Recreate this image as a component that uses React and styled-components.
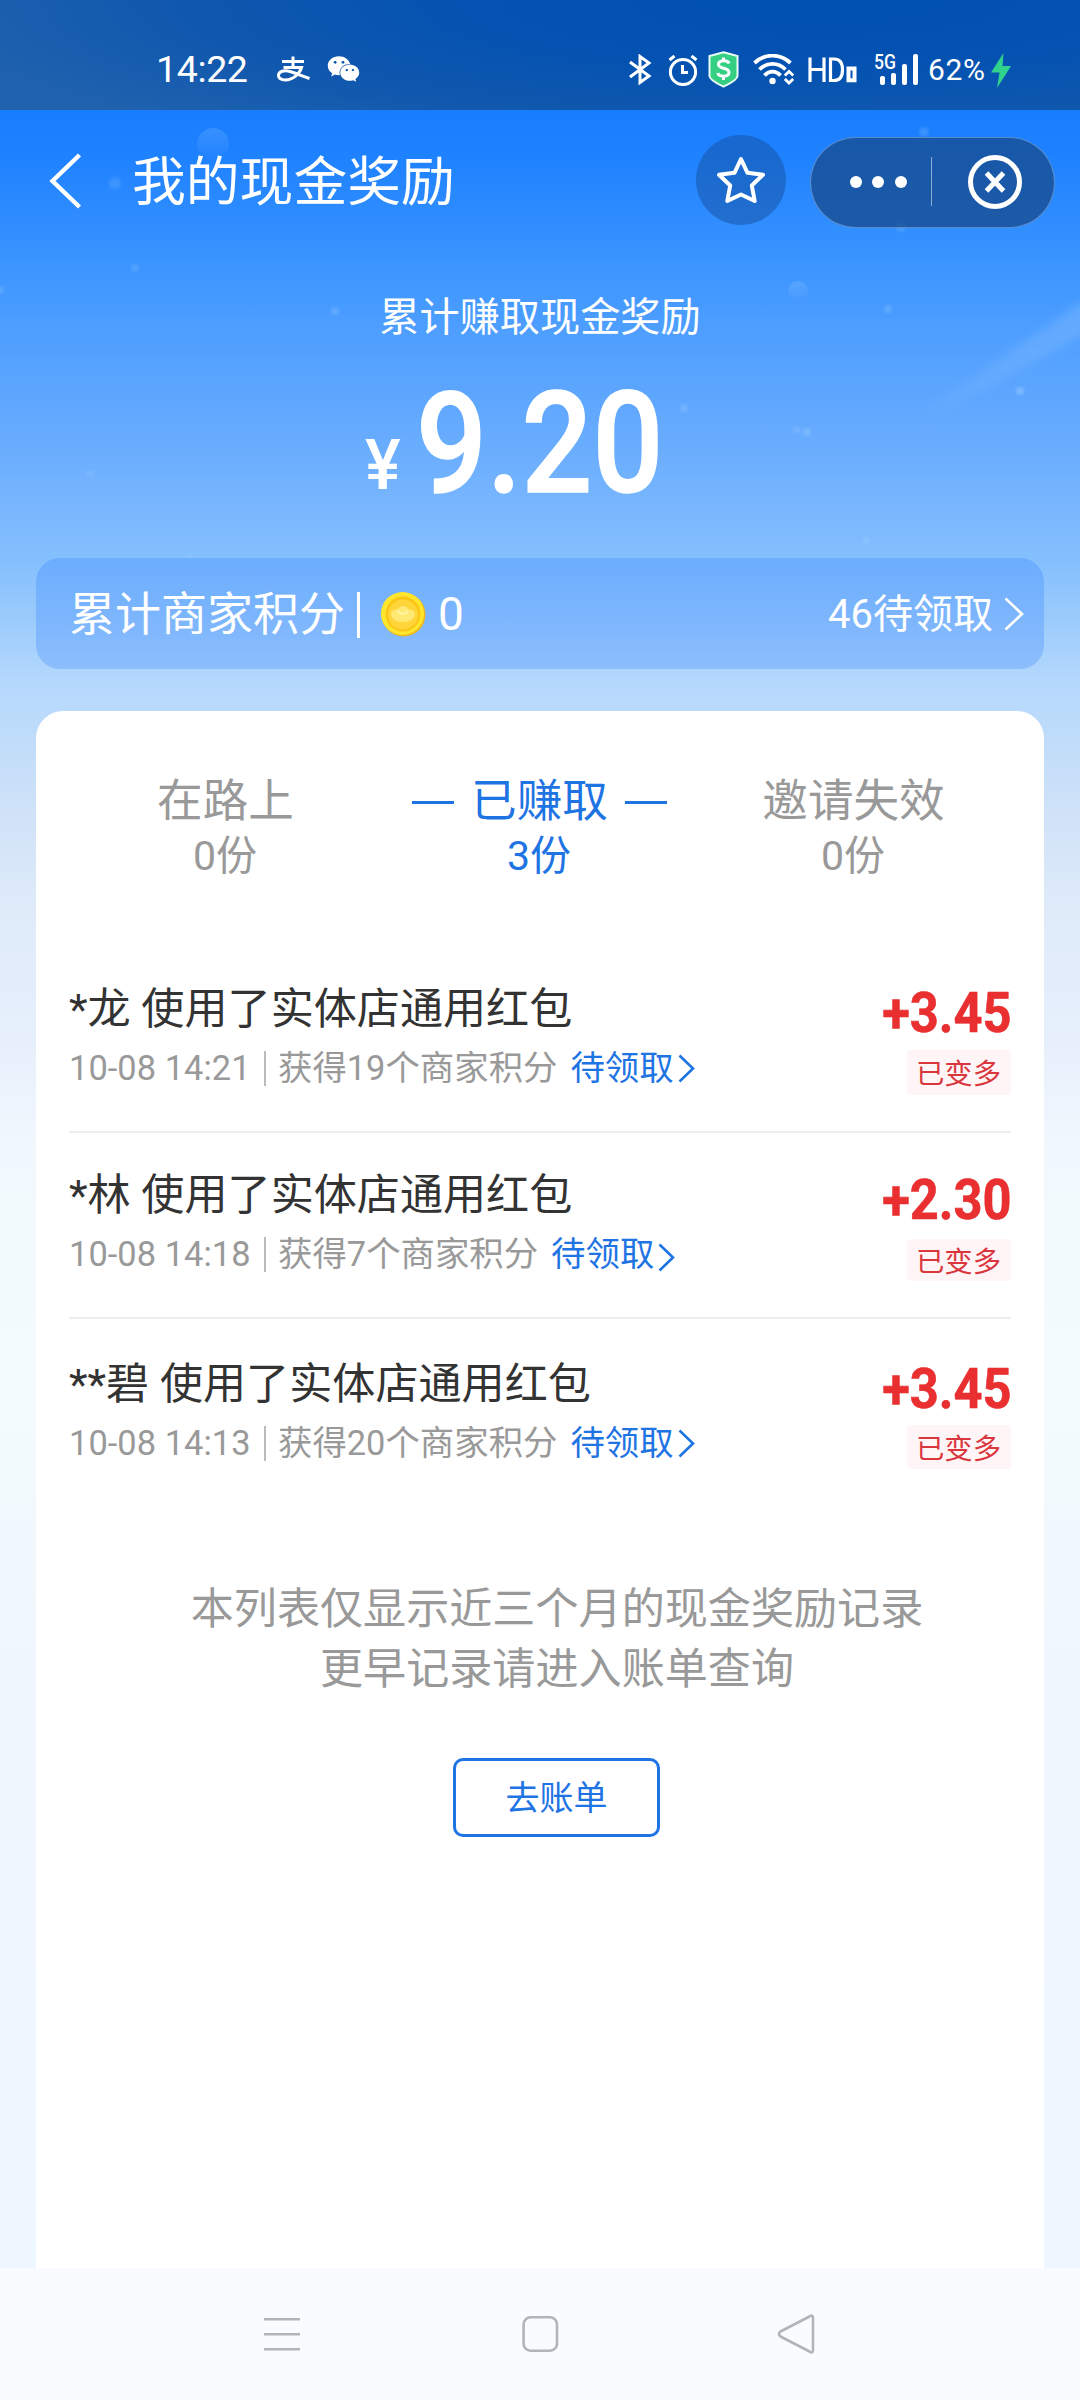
import React from "react";
import styled, { createGlobalStyle } from "styled-components";
import { FaWeixin } from "react-icons/fa";

const GlobalStyle = createGlobalStyle`
  *, *::before, *::after { box-sizing: border-box; }
  body { margin: 0; background: #eef6ff; }
`;

const blue = "#1f74e4";

const Screen = styled.div`
  position: relative;
  width: 1080px;
  height: 2400px;
  display: flex;
  flex-direction: column;
  overflow: hidden;
  font-family: Roboto, "Noto Sans CJK SC", sans-serif;
  white-space: nowrap;
  background: linear-gradient(
    180deg,
    #187dff 110px,
    #1f82ff 160px,
    #3a94ff 260px,
    #4b9dff 320px,
    #63a9fe 420px,
    #79b6fe 510px,
    #84bffe 560px,
    #9bcbfc 620px,
    #b4d8fd 680px,
    #c0dcfa 740px,
    #cfe2f8 810px,
    #dfebf9 910px,
    #e7effc 1040px,
    #f2f9fe 1160px,
    #f3fbfe 1400px,
    #eff6fe 1700px,
    #eef6ff 2268px
  );
`;

const Sky = styled.svg`
  position: absolute;
  top: 0;
  left: 0;
  pointer-events: none;
`;

const StatusBar = styled.header`
  position: relative;
  height: 110px;
  flex: none;
  display: flex;
  justify-content: space-between;
  padding: 51px 69px 19px 156px;
  color: #fff;
  background: radial-gradient(ellipse 800px 150px at 820px 0, #0050b2 0%, #0452b1 45%, #1058ae 80%, #2062ae 115%);
`;

const StatusGroup = styled.div`
  display: flex;
  align-items: flex-start;
`;

const Clock = styled.time`
  margin-top: -1px;
  font-size: 37.6px;
  line-height: 38px;
  letter-spacing: -0.4px;
  width: 121px;
`;

const Glyph = styled.span`
  display: flex;
  margin-left: ${(p) => p.$gap || 0}px;
  padding-top: ${(p) => p.$drop || 0}px;
`;

const Battery = styled.span`
  width: 60px;
  margin-left: 8px;
  padding-top: 3px;
  font-size: 30px;
  line-height: 32px;
  letter-spacing: 0.7px;
`;

const Network = styled.svg`
  overflow: visible;
`;

const TitleBar = styled.div`
  position: relative;
  height: 146px;
  flex: none;
  display: flex;
  align-items: flex-start;
  padding: 25px 25px 0 48px;
  color: #fff;
`;

const BackIcon = styled.svg`
  margin-top: 18px;
`;

const PageTitle = styled.h1`
  margin: 8px 0 0 50px;
  flex: 1;
  font-size: 53.8px;
  line-height: 80px;
  font-weight: 400;
`;

const StarButton = styled.button`
  width: 90px;
  height: 90px;
  border: 0;
  padding: 0;
  border-radius: 50%;
  display: flex;
  align-items: center;
  justify-content: center;
  background: rgba(20, 80, 160, 0.5);
`;

const Capsule = styled.div`
  width: 245px;
  height: 91px;
  margin: 2px 0 0 24px;
  display: flex;
  align-items: center;
  padding-bottom: 2px;
  border: 1px solid rgba(150, 190, 240, 0.5);
  border-radius: 46px;
  background: rgba(24, 78, 146, 0.8);
`;

const CapsuleHalf = styled.span`
  width: ${(p) => p.$w}px;
  display: flex;
  justify-content: center;
  gap: 10.5px;
  padding-left: ${(p) => p.$pad || 0}px;
`;

const Dot = styled.i`
  width: 12px;
  height: 12px;
  border-radius: 50%;
  background: #fff;
`;

const CapsuleLine = styled.i`
  width: 1px;
  height: 49px;
  background: rgba(255, 255, 255, 0.5);
`;

const Hero = styled.section`
  position: relative;
  height: 302px;
  flex: none;
  display: flex;
  flex-direction: column;
  align-items: center;
  color: #fff;
`;

const HeroLabel = styled.div`
  margin-top: 32px;
  font-size: 40.2px;
  line-height: 60px;
`;

const HeroAmount = styled.div`
  width: 1080px;
  height: 140px;
  margin-top: 26px;
  padding-left: 365px;
  display: flex;
  align-items: baseline;
  font-weight: 500;
`;

const Yen = styled.span`
  width: 51px;
  font-size: 70px;
  line-height: 134px;
  font-weight: 500;
`;

const YenMark = styled.span`
  display: inline-block;
  transform: translateY(-3px) scaleX(0.96);
  transform-origin: 0 50%;
`;

const Total = styled.span`
  font-size: 141px;
  line-height: 140px;
  transform: scaleX(0.885);
  transform-origin: 0 50%;
  -webkit-text-stroke: 1.5px #fff;
`;

const PointsBar = styled.section`
  position: relative;
  height: 111px;
  flex: none;
  margin: 0 36px;
  padding: 0 20px 0 33px;
  display: flex;
  align-items: center;
  border-radius: 24px;
  background: rgba(35, 118, 255, 0.25);
  color: #fff;
  font-size: 46px;
`;

const PointsLabel = styled.span`
  padding-bottom: 7px;
`;

const PointsLine = styled.i`
  width: 3px;
  height: 46px;
  margin: 2px 20px 0 12px;
  background: #fff;
`;

const PointsCount = styled.span`
  margin-left: 12px;
  flex: 1;
`;

const Pending = styled.span`
  margin-right: 11px;
  padding-bottom: 6px;
  font-size: 40px;
`;

const Card = styled.main`
  position: relative;
  flex: 1;
  margin: 42px 36px 0;
  padding: 0 33px;
  border-radius: 27px 27px 0 0;
  background: #fff;
`;

const Tabs = styled.nav`
  height: 235px;
  padding-top: 58px;
  display: grid;
  grid-template-columns: 314px 314px 314px;
`;

const Tab = styled.div`
  display: flex;
  flex-direction: column;
  align-items: center;
  color: ${(p) => (p.$active ? blue : "#999")};
`;

const TabName = styled.div`
  display: flex;
  align-items: center;
  gap: 17px;
  margin-right: 1px;
  font-size: 45.6px;
  line-height: 66px;

  &::before,
  &::after {
    content: "";
    display: ${(p) => (p.$active ? "block" : "none")};
    width: 42px;
    height: 3px;
    margin-top: 1px;
    background: ${blue};
  }
`;

const TabCount = styled.div`
  margin: -9px 2px 0 0;
  font-size: 41px;
  line-height: 60px;
`;

const Row = styled.article`
  height: ${(p) => p.$h}px;
  display: flex;
  justify-content: space-between;
  border-bottom: 2px solid ${(p) => (p.$last ? "transparent" : "#eee")};
`;

const RowText = styled.div`
  padding-top: ${(p) => p.$top}px;
`;

const RowTitle = styled.div`
  font-size: 43.1px;
  line-height: 60px;
  color: #333;
`;

const RowMeta = styled.div`
  display: flex;
  align-items: center;
  height: 60px;
  margin-top: -2px;
  font-size: 34.4px;
  line-height: 60px;
  color: #999;
`;

const Stamp = styled.span`
  width: 195px;
  letter-spacing: 0.05px;
`;

const MetaLine = styled.i`
  width: 2px;
  height: 35px;
  margin-right: 12px;
  background: #bbb;
`;

const Claim = styled.a`
  display: flex;
  align-items: center;
  gap: 4px;
  margin-left: 13px;
  color: ${blue};
`;

const RowSide = styled.div`
  display: flex;
  flex-direction: column;
  align-items: flex-end;
  padding-top: ${(p) => p.$top}px;
`;

const Gain = styled.div`
  margin-right: -1px;
  font-size: 55px;
  font-weight: 700;
  line-height: 60px;
  color: #e92f30;
  transform: scaleX(0.92);
  transform-origin: 100% 50%;
  -webkit-text-stroke: 0.6px #e92f30;
`;

const Badge = styled.div`
  width: 104px;
  height: ${(p) => p.$h}px;
  margin-top: ${(p) => p.$gap}px;
  padding: 0 1px 2px 0;
  display: flex;
  align-items: center;
  justify-content: center;
  border-radius: 4px;
  background: #fff5f6;
  color: #d9363e;
  font-size: 28.4px;
`;

const Note = styled.p`
  margin: 71px 0 0 34px;
  text-align: center;
  font-size: 43.1px;
  line-height: 60px;
  color: #999;
`;

const BillButton = styled.button`
  display: block;
  width: 207px;
  height: 79px;
  margin: 58px 0 0 384px;
  padding: 0;
  border: 3px solid ${blue};
  border-radius: 10px;
  background: #fff;
  color: ${blue};
  font-family: inherit;
  font-size: 34px;
  line-height: 72px;
`;

const NavBar = styled.footer`
  position: relative;
  height: 132px;
  flex: none;
  display: flex;
  justify-content: space-between;
  padding: 44px 263px 0 262px;
  background: #fafbff;
`;

function Chevron({ w, h, stroke, color = "currentColor", drop = 0 }) {
  return (
    <svg width={w} height={h + drop * 2} viewBox={`0 ${-drop * 2} ${w} ${h + drop * 2}`} fill="none" stroke={color} strokeWidth={stroke}>
      <path d={`M1.5 1.5L${w - 2} ${h / 2}L1.5 ${h - 1.5}`} />
    </svg>
  );
}

const bubbles = [
  [115, 183, 6, 0.16], [335, 311, 4, 0.18], [684, 408, 4, 0.2],
  [888, 309, 4, 0.18], [1020, 391, 4, 0.3], [797, 430, 4, 0.16],
  [807, 432, 4, 0.22], [924, 132, 5, 0.18], [901, 227, 5, 0.16], [866, 541, 4, 0.16],
  [135, 268, 4, 0.16], [0, 290, 4, 0.16], [90, 474, 4, 0.1], [190, 558, 4, 0.1],
];

const orbs = [
  [213, 144, 16],
  [798, 291, 10],
];

function Decor() {
  return (
    <Sky width="1080" height="600" viewBox="0 0 1080 600">
      <defs>
        <linearGradient id="tail" gradientUnits="userSpaceOnUse" x1="1080" y1="310" x2="915" y2="425">
          <stop offset="0" stopColor="#fff" stopOpacity="0.14" />
          <stop offset="0.5" stopColor="#fff" stopOpacity="0.08" />
          <stop offset="1" stopColor="#fff" stopOpacity="0" />
        </linearGradient>
        <linearGradient id="orb" x1="0.5" y1="0" x2="0.5" y2="1">
          <stop offset="0" stopColor="#bfe0ff" stopOpacity="0.18" />
          <stop offset="1" stopColor="#bfe0ff" stopOpacity="0" />
        </linearGradient>
        <filter id="soft"><feGaussianBlur stdDeviation="1.4" /></filter>
        <filter id="haze" x="-20%" y="-20%" width="140%" height="140%"><feGaussianBlur stdDeviation="4" /></filter>
      </defs>
      <path d="M1100 290L905 424L925 424L1100 325Z" fill="url(#tail)" filter="url(#haze)" />
      {orbs.map(([x, y, r]) => (
        <circle key={x} cx={x} cy={y} r={r} fill="url(#orb)" />
      ))}
      {bubbles.map(([x, y, r, o]) => (
        <circle key={`${x}-${y}`} cx={x} cy={y} r={r} fill="#bfe0ff" opacity={o} filter="url(#soft)" />
      ))}
    </Sky>
  );
}

function Coin() {
  return (
    <svg width="46" height="46" viewBox="0 0 46 46">
      <circle cx="23.5" cy="23.5" r="22" fill="#f0b71c" />
      <circle cx="22.5" cy="22.5" r="21.5" fill="#ffe62e" />
      <circle cx="23" cy="23" r="17.5" fill="#fbc616" />
      <circle cx="23" cy="23.5" r="15" fill="#ffd53a" />
      <path d="M11 22C13 18 16 19 18 18C20 14 27 14 28 18C31 19 33 18 35 22C35 28 30 31 23 31S11 28 11 22Z" fill="#ffe873" />
      <path d="M18 19C19 24 27 24 28 19" stroke="#fff3a0" strokeWidth="2" fill="none" />
    </svg>
  );
}

function StatusIcons() {
  return (
    <StatusGroup>
      <Glyph $drop={3}>
        <svg width="24" height="31" viewBox="0 0 24 31" fill="none" stroke="#fff" strokeWidth="3">
          <path d="M2 8L21 22L12 28.5V2.5L21 9L2 23" />
        </svg>
      </Glyph>
      <Glyph $gap={16} $drop={3}>
        <svg width="30" height="32" viewBox="0 0 30 32" fill="none" stroke="#fff" strokeWidth="3">
          <circle cx="15" cy="18" r="12.6" />
          <path d="M14.5 11V18.5H20M1.5 6L6.5 2M23.5 2L28.5 6" />
        </svg>
      </Glyph>
      <Glyph $gap={10}>
        <svg width="31" height="37" viewBox="0 0 31 37" fill="none">
          <path d="M15.5 1.2L29.5 5V25C29.5 28.5 20 33.5 15.5 35.6C11 33.5 1.5 28.5 1.5 25V5Z" fill="#35cf84" stroke="#e9fff5" strokeWidth="2" />
          <path d="M21 12.5C20 8.8 10.5 8.5 10.5 13.5C10.5 18.5 21 16 21 21.5C21 26.5 10.5 26 9.8 22M15.5 6.5V10M15.5 25V29" stroke="#fff" strokeWidth="3" />
        </svg>
      </Glyph>
      <Glyph $gap={14} $drop={3}>
        <svg width="42" height="31" viewBox="0 0 42 31" fill="none" stroke="#fff" strokeWidth="3.8">
          <path d="M1.5 9C12 -0.8 27 -0.8 37.5 9M6.5 15.5C14 8 25 8 32.5 15.5M11.5 21.5C16 16.3 23 16.3 27.5 21.5" />
          <circle cx="19.5" cy="27" r="3.2" fill="#fff" stroke="none" />
          <path d="M31.8 21.5L36 17.5L40.2 21.5M31.8 25L36 29L40.2 25" strokeWidth="2.8" />
        </svg>
      </Glyph>
      <Glyph $gap={13} $drop={6}>
        <svg width="50" height="26" viewBox="0 0 50 26" fill="none" stroke="#fff" strokeWidth="3.2">
          <path d="M2 0.5V25M16 0.5V25M2 12.5H16M22.5 2H26C33.5 2 34.5 8 34.5 12.7S33.5 23.5 26 23.5H22.5Z" />
          <path d="M40.5 11.5H46.5V23.3H40.5Z" strokeWidth="4" />
        </svg>
      </Glyph>
      <Glyph $gap={16} $drop={2}>
        <Network width="46" height="32" viewBox="0 0 46 32" fill="#fff">
          <text x="0" y="16" fontSize="21" fontWeight="500" fontFamily="Roboto, sans-serif" textLength="22" lengthAdjust="spacingAndGlyphs">5G</text>
          <rect x="6" y="23" width="5" height="9" rx="2" />
          <rect x="17" y="20" width="5" height="12" rx="2" />
          <rect x="28" y="11" width="5" height="21" rx="2" />
          <rect x="39" y="1" width="5" height="31" rx="2" />
        </Network>
      </Glyph>
      <Battery>62%</Battery>
      <Glyph $gap={3} $drop={2}>
        <svg width="20" height="35" viewBox="0 0 20 35">
          <path d="M12.5 0L0 19.5H8.5L6 35L20 13H11.5Z" fill="#31d28b" />
        </svg>
      </Glyph>
    </StatusGroup>
  );
}

const tabs = [
  { name: "在路上", count: "0份" },
  { name: "已赚取", count: "3份", active: true },
  { name: "邀请失效", count: "0份" },
];

const records = [
  { who: "*龙", time: "10-08 14:21", points: 19, gain: "+3.45", h: 187, top: 34, side: 37, gap: 7, badge: 45, drop: 0 },
  { who: "*林", time: "10-08 14:18", points: 7, gain: "+2.30", h: 186, top: 33, side: 37, gap: 9, badge: 42, drop: 3 },
  { who: "**碧", time: "10-08 14:13", points: 20, gain: "+3.45", h: 190, top: 36, side: 40, gap: 6, badge: 44, drop: 0 },
];

export default function App() {
  return (
    <Screen>
      <GlobalStyle />
      <Decor />
      <StatusBar>
        <StatusGroup>
          <Clock>14:22</Clock>
          <Glyph $drop={5}>
            <svg width="34" height="26" viewBox="0 0 34 26" fill="none" stroke="#fff" strokeWidth="3">
              <path d="M5 5.5H27M16 0.5V11.5M6.5 11.5H24.5C22.5 18 16 24 8.5 24C3.5 24 1.2 21.7 1.5 19C2 15.5 7 13.8 13 15.5C20 17.5 25 20 32.5 22.5" />
            </svg>
          </Glyph>
          <Glyph $gap={16} $drop={3}>
            <FaWeixin size={33} style={{ height: 30 }} />
          </Glyph>
        </StatusGroup>
        <StatusIcons />
      </StatusBar>

      <TitleBar>
        <BackIcon width="34" height="56" viewBox="0 0 34 56" fill="none" stroke="#fff" strokeWidth="4.4">
          <path d="M31.5 2L4.5 28L31.5 54" />
        </BackIcon>
        <PageTitle>我的现金奖励</PageTitle>
        <StarButton aria-label="收藏">
          <svg width="50" height="50" viewBox="0 0 50 50" fill="none" stroke="#fff" strokeWidth="4" strokeLinejoin="round">
            <path d="M25 4L31.5 17.8L47 19.8L35.8 30.5L38.7 46L25 39.5L11.3 46L14.2 30.5L3 19.8L18.5 17.8Z" />
          </svg>
        </StarButton>
        <Capsule>
          <CapsuleHalf $w={120} $pad={14}>
            <Dot />
            <Dot />
            <Dot />
          </CapsuleHalf>
          <CapsuleLine />
          <CapsuleHalf $w={122} $pad={4}>
            <svg width="56" height="56" viewBox="0 0 56 56" fill="none" stroke="#fff" strokeWidth="5">
              <circle cx="28" cy="28" r="24.5" />
              <path d="M19.5 19L36.5 37M36.5 19L19.5 37" />
            </svg>
          </CapsuleHalf>
        </Capsule>
      </TitleBar>

      <Hero>
        <HeroLabel>累计赚取现金奖励</HeroLabel>
        <HeroAmount>
          <Yen><YenMark>¥</YenMark></Yen>
          <Total>9.20</Total>
        </HeroAmount>
      </Hero>

      <PointsBar>
        <PointsLabel>累计商家积分</PointsLabel>
        <PointsLine />
        <Coin />
        <PointsCount>0</PointsCount>
        <Pending>46待领取</Pending>
        <Chevron w={20} h={34} stroke={2.6} />
      </PointsBar>

      <Card>
        <Tabs>
          {tabs.map((t) => (
            <Tab key={t.name} $active={t.active}>
              <TabName $active={t.active}>{t.name}</TabName>
              <TabCount>{t.count}</TabCount>
            </Tab>
          ))}
        </Tabs>
        {records.map((r, i) => (
          <Row key={r.time} $h={r.h} $last={i === records.length - 1}>
            <RowText $top={r.top}>
              <RowTitle>{r.who} 使用了实体店通用红包</RowTitle>
              <RowMeta>
                <Stamp>{r.time}</Stamp>
                <MetaLine />
                <span>获得{r.points}个商家积分</span>
                <Claim>
                  待领取
                  <Chevron w={17} h={29} stroke={2.6} drop={r.drop} />
                </Claim>
              </RowMeta>
            </RowText>
            <RowSide $top={r.side}>
              <Gain>{r.gain}</Gain>
              <Badge $gap={r.gap} $h={r.badge}>已变多</Badge>
            </RowSide>
          </Row>
        ))}
        <Note>
          本列表仅显示近三个月的现金奖励记录
          <br />
          更早记录请进入账单查询
        </Note>
        <BillButton>去账单</BillButton>
      </Card>

      <NavBar>
        <svg width="40" height="44" viewBox="0 0 40 44" stroke="#b3b4ba" strokeWidth="2.6">
          <path d="M2 7.3H38M2 22.3H38M2 37.3H38" />
        </svg>
        <svg width="40" height="44" viewBox="0 0 40 44" fill="none" stroke="#b3b4ba" strokeWidth="2.6">
          <rect x="3.6" y="5.3" width="33.4" height="33.4" rx="7" />
        </svg>
        <svg width="40" height="44" viewBox="0 0 40 44" fill="none" stroke="#b3b4ba" strokeWidth="2.6" strokeLinejoin="round">
          <path d="M32.5 4.5Q36 2 36 6V38Q36 42 32.5 39.5L3.5 24.5Q0.5 22 3.5 19.5Z" />
        </svg>
      </NavBar>
    </Screen>
  );
}
